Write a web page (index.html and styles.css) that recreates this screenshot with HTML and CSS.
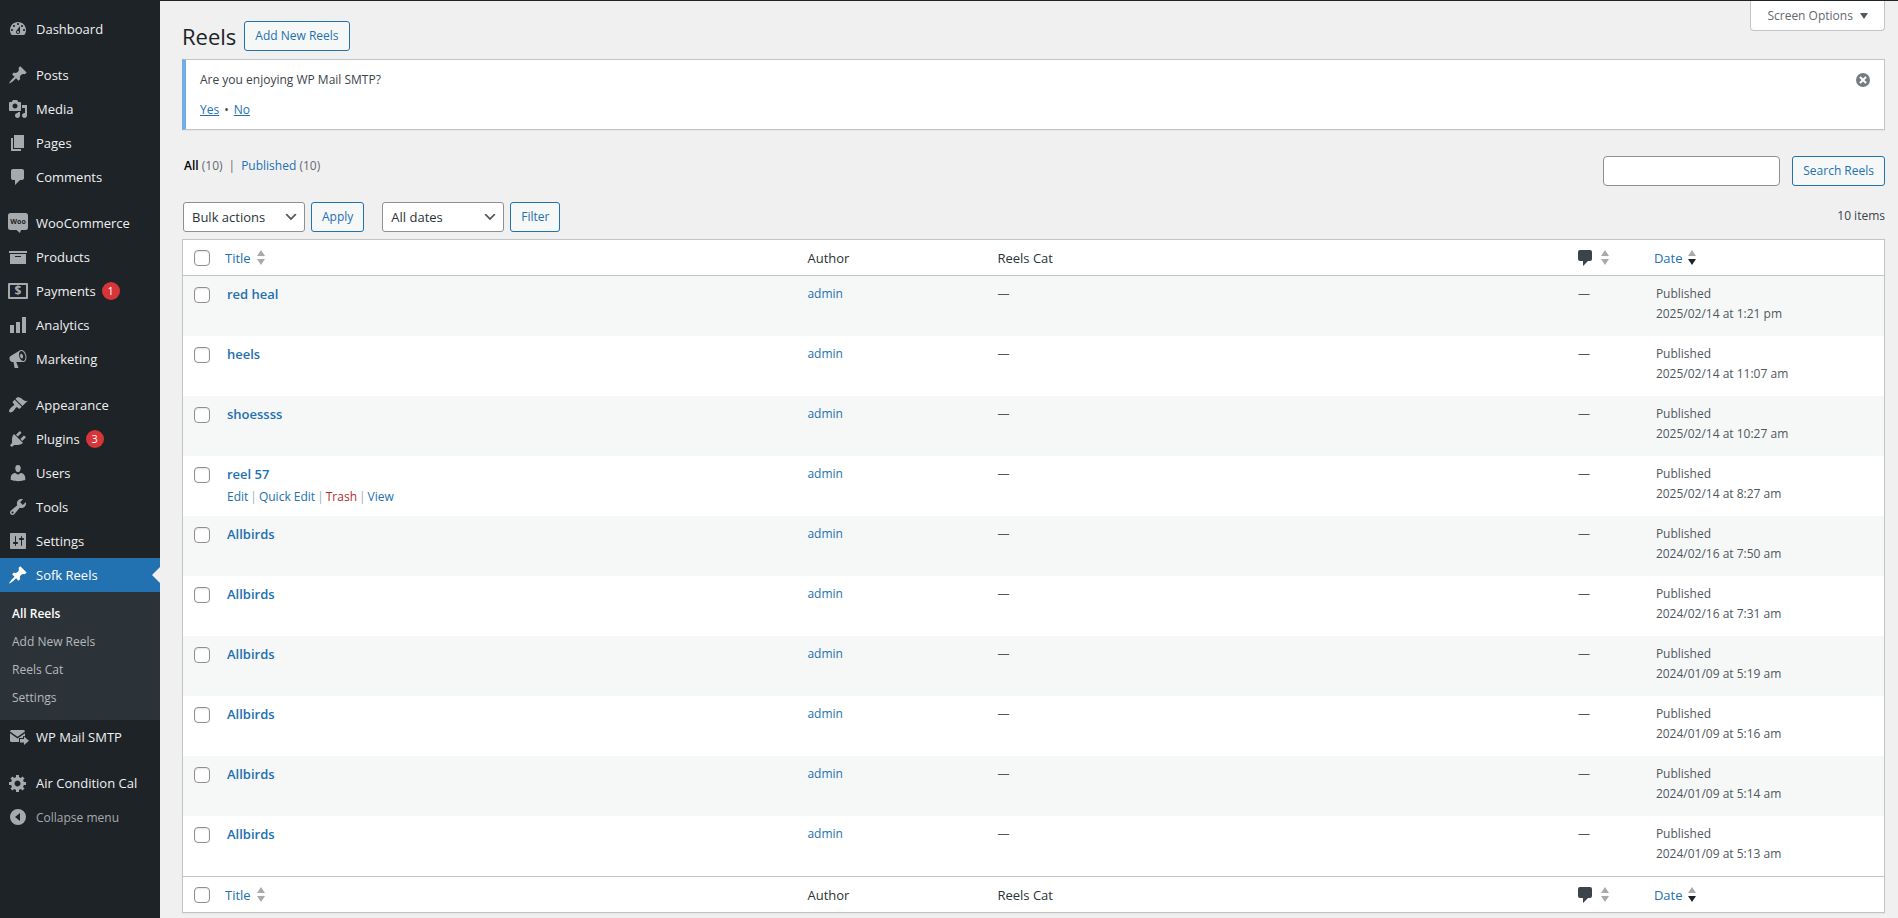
FILE: index.html
```html
<!DOCTYPE html>
<html lang="en">
<head>
  <meta charset="UTF-8">
  <title>Reels</title>
  <link rel="stylesheet" href="styles.css">
</head>
<body>
  <div class="topbar"></div>
  <div class="layout">
    <nav class="sidebar">
      <ul class="menu">
        <li><a href="#"><svg viewBox="0 0 20 20"><path d="M3.76 16h12.48c1.1-1.37 1.76-3.11 1.76-5 0-4.42-3.58-8-8-8s-8 3.58-8 8c0 1.89.66 3.63 1.76 5zM10 4c.55 0 1 .45 1 1s-.45 1-1 1-1-.45-1-1 .45-1 1-1zM6 6c.55 0 1 .45 1 1s-.45 1-1 1-1-.45-1-1 .45-1 1-1zm8 0c.55 0 1 .45 1 1s-.45 1-1 1-1-.45-1-1 .45-1 1-1zm-5.37 5.55L12 7v6c0 1.1-.9 2-2 2s-2-.9-2-2c0-.57.24-1.08.63-1.45zM4 10c.55 0 1 .45 1 1s-.45 1-1 1-1-.45-1-1 .45-1 1-1zm12 0c.55 0 1 .45 1 1s-.45 1-1 1-1-.45-1-1 .45-1 1-1zm-5 3c0-.55-.45-1-1-1s-1 .45-1 1 .45 1 1 1 1-.45 1-1z"/></svg>Dashboard</a></li>
      </ul>
      <ul class="menu">
        <li><a href="#"><svg viewBox="0 0 20 20"><path d="M10.44 3.02l1.82-1.82 6.36 6.35-1.83 1.82c-1.05-.68-2.48-.57-3.41.36l-.75.75c-.92.93-1.04 2.35-.35 3.41l-1.83 1.82-2.41-2.41-2.8 2.79c-.42.42-3.38 2.71-3.8 2.29s1.86-3.39 2.28-3.81l2.79-2.79L4.1 9.36l1.83-1.82c1.05.69 2.48.57 3.4-.36l.75-.75c.93-.92 1.05-2.35.36-3.41z"/></svg>Posts</a></li>
        <li><a href="#"><svg viewBox="0 0 20 20"><path d="M13 11V4c0-.55-.45-1-1-1h-1.67L9 1H5L3.67 3H2c-.55 0-1 .45-1 1v7c0 .55.45 1 1 1h10c.55 0 1-.45 1-1zM7 4.5c1.38 0 2.5 1.12 2.5 2.5S8.38 9.5 7 9.5 4.5 8.38 4.5 7 5.62 4.5 7 4.5zM14 6h5v10.5c0 1.38-1.12 2.5-2.5 2.5S14 17.88 14 16.5s1.12-2.5 2.5-2.5c.17 0 .34.02.5.05V9h-3V6zm-4 8.05V13h2v3.5c0 1.38-1.12 2.5-2.5 2.5S7 17.88 7 16.5 8.12 14 9.5 14c.17 0 .34.02.5.05z"/></svg>Media</a></li>
        <li><a href="#"><svg viewBox="0 0 20 20"><path d="M6 15V2h10v13H6zm-1 1h8v2H3V5h2v11z"/></svg>Pages</a></li>
        <li><a href="#"><svg viewBox="0 0 20 20"><path d="M5 2h9c1.1 0 2 .9 2 2v7c0 1.1-.9 2-2 2h-2l-5 5v-5H5c-1.1 0-2-.9-2-2V4c0-1.1.9-2 2-2z"/></svg>Comments</a></li>
      </ul>
      <ul class="menu">
        <li><a href="#"><svg viewBox="0 0 20 20"><path d="M2.5 0h15A2.5 2.5 0 0 1 20 2.500v12a2.500 2.500 0 0 1-2.500 2.500H13l-1 3-3.500-3h-6A2.500 2.500 0 0 1 0 14.500v-12A2.500 2.500 0 0 1 2.500 0z"/><text class="icon-woo" x="10" y="11">Woo</text></svg>WooCommerce</a></li>
        <li><a href="#"><svg viewBox="0 0 20 20"><path d="M19 4v2H1V4h18zM2 7h16v10H2V7zm11 3V9H7v1h6z"/></svg>Products</a></li>
        <li><a href="#"><svg viewBox="0 0 20 20"><path fill-rule="evenodd" d="M1 2h18a1 1 0 0 1 1 1v14a1 1 0 0 1-1 1H1a1 1 0 0 1-1-1V3a1 1 0 0 1 1-1zm1 2v12h16V4z"/><text class="icon-dollar" x="10" y="14">$</text></svg>Payments<span class="badge">1</span></a></li>
        <li><a href="#"><svg viewBox="0 0 20 20"><path d="M18 18V2h-4v16h4zm-6 0V7H8v11h4zm-6 0v-8H2v8h4z"/></svg>Analytics</a></li>
        <li><a href="#"><svg viewBox="0 0 20 20"><path d="M18.150 5.940c.46 1.620.38 3.220-.02 4.480-.42 1.280-1.260 2.180-2.300 2.480-.16.060-.26.060-.4.060-.06.020-.12.020-.18.020-.06.020-.14.020-.22.020h-6.800l2.220 5.500c.02.140-.06.260-.14.340-.08.100-.24.160-.34.160H6.950c-.1 0-.26-.06-.34-.16-.08-.08-.16-.2-.14-.34l-1-5.500H4.250l-.02-.02c-.5.060-1.080-.18-1.540-.62s-.88-1.080-1.060-1.880c-.24-.8-.2-1.560-.02-2.200.18-.62.580-1.080 1.060-1.300l.02-.02 9-5.400c.1-.06.180-.1.240-.16.060-.04.140-.08.240-.12.160-.08.280-.12.500-.18 1.040-.3 2.240.1 3.220.98s1.840 2.240 2.260 3.860zm-2.580 5.980h-.02c.4-.1.740-.34 1.040-.7.580-.7.860-1.760.860-3.040 0-.64-.1-1.300-.28-1.980-.34-1.360-1.020-2.500-1.780-3.240s-1.680-1.100-2.460-.88c-.82.220-1.400.960-1.700 2-.32 1.040-.28 2.360.060 3.720.38 1.360 1 2.500 1.800 3.240.78.740 1.620 1.100 2.480.88zm-2.540-7.080c.22-.04.420-.02.620.040.38.160.76.480 1.020 1s.42 1.200.42 1.780c0 .3-.04.560-.12.8-.18.480-.44.840-.86.940-.34.100-.8-.06-1.140-.4s-.64-.86-.78-1.500c-.18-.62-.12-1.240.02-1.720s.48-.84.820-.94z"/></svg>Marketing</a></li>
      </ul>
      <ul class="menu">
        <li><a href="#"><svg viewBox="0 0 20 20"><path d="M14.48 11.06L7.41 3.99l1.5-1.5c.5-.56 2.3-.47 3.51.32 1.21.8 1.43 1.28 2.91 2.1 1.18.64 2.45 1.26 4.45.85zm-.71.71L6.7 4.7 4.93 6.47c-.39.39-.39 1.02 0 1.41l1.06 1.06c.39.39.39 1.03 0 1.42-.6.6-1.43 1.11-2.21 1.69-.35.26-.7.53-1.01.84C1.43 14.23.4 16.08 1.4 17.07c.99 1 2.84-.03 4.18-1.36.31-.31.58-.66.85-1.02.57-.78 1.08-1.61 1.69-2.21.39-.39 1.02-.39 1.41 0l1.06 1.06c.39.39 1.02.39 1.41 0z"/></svg>Appearance</a></li>
        <li><a href="#"><svg viewBox="0 0 20 20"><path d="M13.11 4.36L9.87 7.6 8 5.73l3.24-3.24c.35-.34 1.05-.2 1.56.32.52.51.66 1.21.31 1.55zm-8 1.77l.91-1.12 9.01 9.01-1.19.84c-.71.71-2.63 1.16-3.82 1.16H6.14L4.9 17.26c-.59.59-1.54.59-2.12 0-.59-.58-.59-1.53 0-2.12l1.24-1.24v-3.88c0-1.13.4-3.19 1.09-3.89zm7.26 3.97l3.24-3.24c.34-.35 1.04-.21 1.55.31.52.51.66 1.21.31 1.55l-3.24 3.25z"/></svg>Plugins<span class="badge">3</span></a></li>
        <li><a href="#"><svg viewBox="0 0 20 20"><path d="M10 9.25c-2.27 0-2.73-3.44-2.73-3.44C7 4.02 7.82 2 9.97 2c2.16 0 2.98 2.02 2.71 3.81 0 0-.41 3.44-2.68 3.44zm0 2.57L12.72 10c2.39 0 4.52 2.33 4.52 4.53v2.49s-3.65 1.13-7.24 1.13c-3.65 0-7.24-1.13-7.24-1.13v-2.49c0-2.25 1.94-4.48 4.47-4.48z"/></svg>Users</a></li>
        <li><a href="#"><svg viewBox="0 0 20 20"><path d="M16.68 9.77c-1.34 1.34-3.3 1.67-4.95.99l-5.41 6.52c-.99.99-2.59.99-3.58 0s-.99-2.59 0-3.57l6.52-5.42c-.68-1.65-.35-3.61.99-4.95 1.28-1.28 3.12-1.62 4.72-1.06l-2.89 2.89 2.82 2.82 2.86-2.87c.53 1.58.18 3.39-1.08 4.65zM3.81 16.21c.4.39 1.04.39 1.43 0 .4-.4.4-1.04 0-1.43-.39-.4-1.03-.4-1.43 0-.39.39-.39 1.03 0 1.43z"/></svg>Tools</a></li>
        <li><a href="#"><svg viewBox="0 0 20 20"><path d="M18 17V3c0-.55-.45-1-1-1H3c-.55 0-1 .45-1 1v14c0 .55.45 1 1 1h14c.55 0 1-.45 1-1zM8 11h1c.55 0 1 .45 1 1s-.45 1-1 1H8v1.5c0 .28-.22.5-.5.5s-.5-.22-.5-.5V13H6c-.55 0-1-.45-1-1s.45-1 1-1h1V5.500c0-.28.22-.5.5-.5s.5.22.5.5V11zm5-2h-1c-.55 0-1-.45-1-1s.45-1 1-1h1V5.500c0-.28.22-.5.5-.5s.5.22.5.5V7h1c.55 0 1 .45 1 1s-.45 1-1 1h-1v5.500c0 .28-.22.5-.5.5s-.5-.22-.5-.5V9z"/></svg>Settings</a></li>
        <li class="current">
          <a href="#"><svg viewBox="0 0 20 20"><path d="M10.44 3.02l1.82-1.82 6.36 6.35-1.83 1.82c-1.05-.68-2.48-.57-3.41.36l-.75.75c-.92.93-1.04 2.35-.35 3.41l-1.83 1.82-2.41-2.41-2.8 2.79c-.42.42-3.38 2.71-3.8 2.29s1.86-3.39 2.28-3.81l2.79-2.79L4.1 9.36l1.83-1.82c1.05.69 2.48.57 3.4-.36l.75-.75c.93-.92 1.05-2.35.36-3.41z"/></svg>Sofk Reels</a>
          <ul class="submenu">
            <li><a href="#" class="active">All Reels</a></li>
            <li><a href="#">Add New Reels</a></li>
            <li><a href="#">Reels Cat</a></li>
            <li><a href="#">Settings</a></li>
          </ul>
        </li>
        <li><a href="#"><svg viewBox="0 0 20 20"><path d="M3.500 3h12A1.500 1.500 0 0 1 17 4.500L9.500 9.800 2 4.500A1.500 1.500 0 0 1 3.500 3zM2 6.200l7.500 5.200L17 6.200V9l-2 .2V11h-4v4H3.500A1.500 1.500 0 0 1 2 13.500zM12 12h4v-2.500l5 4.300-5 4.200v-2.500h-4z"/></svg>WP Mail SMTP</a></li>
      </ul>
      <ul class="menu">
        <li><a href="#"><svg viewBox="0 0 20 20"><path d="M18 12h-2.18c-.17.7-.44 1.35-.81 1.93l1.54 1.54-2.1 2.1-1.54-1.54c-.58.36-1.23.63-1.91.79V19H8v-2.18c-.68-.16-1.33-.43-1.91-.79l-1.54 1.54-2.12-2.12 1.54-1.54c-.36-.58-.63-1.23-.79-1.91H1V9.03h2.17c.16-.7.44-1.35.8-1.94L2.43 5.55l2.1-2.1 1.54 1.54c.58-.37 1.24-.64 1.93-.81V2h3v2.18c.68.16 1.33.43 1.91.79l1.54-1.54 2.12 2.12-1.54 1.54c.36.59.64 1.24.8 1.94H18V12zm-8.5 1.5c1.66 0 3-1.34 3-3s-1.34-3-3-3-3 1.34-3 3 1.34 3 3 3z"/></svg>Air Condition Cal</a></li>
        <li><button type="button" class="collapse"><svg viewBox="0 0 20 20"><path fill-rule="evenodd" d="M10 2a8 8 0 1 0 0 16 8 8 0 0 0 0-16zm2 4v8l-5-4z"/></svg>Collapse menu</button></li>
      </ul>
    </nav>

    <main class="content">
      <header class="page-head">
        <h1>Reels</h1>
        <a href="#" class="btn">Add New Reels</a>
        <button type="button" class="screen-options">Screen Options <svg viewBox="0 0 8 6"><path d="M0 0h8L4 6z"/></svg></button>
      </header>

      <div class="notice">
        <div>
          <p>Are you enjoying WP Mail SMTP?</p>
          <p class="answers"><a href="#">Yes</a><span>•</span><a href="#">No</a></p>
        </div>
        <button type="button" class="dismiss" aria-label="Dismiss this notice"><svg viewBox="0 0 14 14"><circle cx="7" cy="7" r="7"/><path d="M4 4l6 6M10 4l-6 6"/></svg></button>
      </div>

      <div class="views">
        <ul>
          <li><a href="#" class="all">All</a> (10)</li>
          <li>|</li>
          <li><a href="#">Published</a> (10)</li>
        </ul>
        <form class="search">
          <input type="search" aria-label="Search Reels">
          <button type="button" class="btn">Search Reels</button>
        </form>
      </div>

      <div class="tablenav">
        <select aria-label="Select bulk action"><option>Bulk actions</option></select>
        <button type="button" class="btn">Apply</button>
        <select class="dates" aria-label="Filter by date"><option>All dates</option></select>
        <button type="button" class="btn">Filter</button>
        <span class="count">10 items</span>
      </div>

      <table class="list">
        <thead>
          <tr>
            <th class="check"><input type="checkbox" aria-label="Select all"></th>
            <th><a href="#">Title<svg class="sort" viewBox="0 0 8 15"><path d="M4 0l4 6H0zM0 9h8l-4 6z"/></svg></a></th>
            <th class="author">Author</th>
            <th>Reels Cat</th>
            <th class="comments"><a href="#" aria-label="Comments"><svg class="bubble" viewBox="0 0 14 16"><path d="M2 0h10a2 2 0 0 1 2 2v7a2 2 0 0 1-2 2h-2l-5 5v-5H2a2 2 0 0 1-2-2V2a2 2 0 0 1 2-2z"/></svg><svg class="sort" viewBox="0 0 8 15"><path d="M4 0l4 6H0zM0 9h8l-4 6z"/></svg></a></th>
            <th class="date"><a href="#">Date<svg class="sort" viewBox="0 0 8 15"><path d="M4 0l4 6H0z"/><path class="on" d="M0 9h8l-4 6z"/></svg></a></th>
          </tr>
        </thead>
        <tbody id="rows"></tbody>
        <tfoot>
          <tr>
            <th class="check"><input type="checkbox" aria-label="Select all"></th>
            <th><a href="#">Title<svg class="sort" viewBox="0 0 8 15"><path d="M4 0l4 6H0zM0 9h8l-4 6z"/></svg></a></th>
            <th>Author</th>
            <th>Reels Cat</th>
            <th><a href="#" aria-label="Comments"><svg class="bubble" viewBox="0 0 14 16"><path d="M2 0h10a2 2 0 0 1 2 2v7a2 2 0 0 1-2 2h-2l-5 5v-5H2a2 2 0 0 1-2-2V2a2 2 0 0 1 2-2z"/></svg><svg class="sort" viewBox="0 0 8 15"><path d="M4 0l4 6H0zM0 9h8l-4 6z"/></svg></a></th>
            <th><a href="#">Date<svg class="sort" viewBox="0 0 8 15"><path d="M4 0l4 6H0z"/><path class="on" d="M0 9h8l-4 6z"/></svg></a></th>
          </tr>
        </tfoot>
      </table>
    </main>
  </div>

  <script>
    const reels = [
      ['red heal', '2025/02/14 at 1:21 pm'],
      ['heels', '2025/02/14 at 11:07 am'],
      ['shoessss', '2025/02/14 at 10:27 am'],
      ['reel 57', '2025/02/14 at 8:27 am', true],
      ['Allbirds', '2024/02/16 at 7:50 am'],
      ['Allbirds', '2024/02/16 at 7:31 am'],
      ['Allbirds', '2024/01/09 at 5:19 am'],
      ['Allbirds', '2024/01/09 at 5:16 am'],
      ['Allbirds', '2024/01/09 at 5:14 am'],
      ['Allbirds', '2024/01/09 at 5:13 am']
    ];

    const actions = `<div class="row-actions"><a href="#">Edit</a> | <a href="#">Quick Edit</a> | <a href="#" class="trash">Trash</a> | <a href="#">View</a></div>`;

    document.getElementById('rows').innerHTML = reels.map(([title, date, open]) => `
      <tr>
        <td class="check"><input type="checkbox" aria-label="Select ${title}"></td>
        <td><a href="#" class="row-title">${title}</a>${open ? actions : ''}</td>
        <td><a href="#">admin</a></td>
        <td>—</td>
        <td>—</td>
        <td>Published<br>${date}</td>
      </tr>`).join('');
  </script>
</body>
</html>
```
FILE: styles.css
```css
* {
  box-sizing: border-box;
}

body {
  margin: 0;
  min-height: 100vh;
  display: flex;
  flex-direction: column;
  background: #f0f0f1;
  color: #3c434a;
  font-family: "Open Sans", "Noto Sans", sans-serif;
  font-size: 12px;
  line-height: 20px;
}

a {
  color: #2271b1;
  text-decoration: none;
}

ul, p, h1 {
  margin: 0;
  padding: 0;
}

ul {
  list-style: none;
}

button, input, select {
  font-family: inherit;
  font-size: inherit;
  margin: 0;
}

.topbar {
  height: 1px;
  background: #1d2327;
}

.layout {
  display: flex;
  flex: 1;
}

/* Sidebar */
.sidebar {
  width: 160px;
  flex-shrink: 0;
  padding-top: 11px;
  background: #1d2327;
}

.menu {
  margin-bottom: 12px;
}

.menu > li > a,
.collapse {
  display: flex;
  align-items: center;
  width: 100%;
  height: 34px;
  padding: 0 0 0 8px;
  color: #f0f0f1;
  font-size: 13px;
  white-space: nowrap;
}

.menu svg {
  width: 20px;
  height: 20px;
  margin-right: 8px;
  fill: #a7aaad;
  overflow: visible;
}

.menu .icon-woo {
  fill: #1d2327;
  font-size: 7px;
  font-weight: bold;
  text-anchor: middle;
}

.icon-dollar {
  font-size: 12px;
  font-weight: bold;
  text-anchor: middle;
}

.badge {
  width: 18px;
  height: 18px;
  margin-left: 6px;
  border-radius: 9px;
  background: #d63638;
  color: #fff;
  font-size: 11px;
  line-height: 18px;
  text-align: center;
}

.menu > .current > a {
  position: relative;
  background: #2271b1;
  color: #fff;
}

.menu .current > a svg {
  fill: #fff;
}

.current > a::after {
  content: "";
  position: absolute;
  right: 0;
  border: 8px solid transparent;
  border-right-color: #f0f0f1;
  border-left: 0;
}

.submenu {
  padding: 8px 0;
  background: #2c3338;
}

.submenu a {
  display: block;
  padding: 4px 12px;
  color: #b5b8bb;
}

.submenu .active {
  color: #fff;
  font-weight: 600;
}

.menu .collapse {
  border: 0;
  background: none;
  color: #a7aaad;
  font-size: 12px;
}

/* Content */
.content {
  flex: 1;
  padding: 0 13px 0 22px;
}

.page-head {
  display: flex;
  align-items: flex-end;
  height: 50px;
}

h1 {
  color: #1d2327;
  font-size: 22px;
  font-weight: 400;
  line-height: 30px;
}

.btn {
  height: 30px;
  padding: 0 10px;
  border: 1px solid #2271b1;
  border-radius: 3px;
  background: #f6f7f7;
  color: #2271b1;
  line-height: 28px;
  white-space: nowrap;
}

.page-head .btn {
  margin-left: 8px;
}

.screen-options {
  align-self: flex-start;
  height: 30px;
  margin-left: auto;
  padding: 0 16px;
  border: 1px solid #c3c4c7;
  border-top: 0;
  border-radius: 0 0 4px 4px;
  background: #fff;
  color: #646970;
}

.screen-options svg {
  width: 8px;
  height: 6px;
  margin-left: 4px;
  fill: #50575e;
  vertical-align: 1px;
}

.notice {
  display: flex;
  justify-content: space-between;
  align-items: flex-start;
  margin-top: 8px;
  padding: 10px 14px 9px;
  border: 1px solid #c3c4c7;
  border-left: 4px solid #72aee6;
  background: #fff;
  box-shadow: 0 1px 1px rgba(0, 0, 0, .04);
}

.answers {
  display: flex;
  gap: 5px;
  margin-top: 10px;
}

.answers a {
  text-decoration: underline;
}

.dismiss {
  height: 20px;
  padding: 0;
  border: 0;
  background: none;
}

.dismiss svg {
  display: block;
  width: 14px;
  height: 14px;
  fill: #787c82;
  stroke: #fff;
}

.dismiss circle {
  stroke: none;
}

.dismiss path {
  stroke-width: 2;
}

.views {
  display: flex;
  justify-content: space-between;
  align-items: flex-start;
  margin-top: 26px;
}

.views ul {
  display: flex;
  gap: 6px;
  padding-left: 2px;
  color: #646970;
}

.views .all {
  color: #000;
  font-weight: 600;
}

.search {
  display: flex;
  gap: 12px;
}

.search input {
  width: 177px;
  height: 30px;
  padding: 0 8px;
  border: 1px solid #8c8f94;
  border-radius: 4px;
  background: #fff;
}

.tablenav {
  display: flex;
  gap: 6px;
  margin: 16px 0 7px 1px;
}

.tablenav select {
  appearance: none;
  width: 122px;
  height: 30px;
  padding: 0 24px 0 8px;
  border: 1px solid #8c8f94;
  border-radius: 3px;
  background: #fff url("data:image/svg+xml,%3Csvg xmlns='http://www.w3.org/2000/svg' viewBox='0 0 20 20'%3E%3Cpath d='M5 6l5 5 5-5 2 1-7 7-7-7 2-1z' fill='%23555'/%3E%3C/svg%3E") no-repeat right 5px center / 16px 16px;
  color: #2c3338;
  font-size: 13px;
}

.tablenav .dates {
  margin-left: 12px;
}

.count {
  margin-left: auto;
  line-height: 28px;
}

/* Table */
.list {
  width: 100%;
  table-layout: fixed;
  border: 1px solid #c3c4c7;
  border-spacing: 0;
  background: #fff;
  box-shadow: 0 1px 1px rgba(0, 0, 0, .04);
}

.list th {
  height: 36px;
  padding: 0 10px;
  color: #2c3338;
  font-size: 13px;
  font-weight: 400;
  text-align: left;
}

.list thead th {
  border-bottom: 1px solid #c3c4c7;
}

.list tfoot th {
  border-top: 1px solid #c3c4c7;
}

.list th a {
  display: flex;
  align-items: center;
  margin-left: -2px;
}

.list td {
  height: 60px;
  padding: 8px 10px;
  color: #50575e;
  vertical-align: top;
}

.list tbody tr:nth-child(odd) {
  background: #f6f7f7;
}

.list .check {
  width: 34px;
  padding-left: 11px;
  padding-right: 0;
}

.list td.check {
  padding-top: 11px;
}

.author {
  width: 190px;
}

.comments {
  width: 78px;
}

.date {
  width: 14%;
}

.check input {
  display: block;
  appearance: none;
  width: 16px;
  height: 16px;
  border: 1px solid #8c8f94;
  border-radius: 4px;
  background: #fff;
  box-shadow: inset 0 1px 2px rgba(0, 0, 0, .1);
}

.sort {
  width: 8px;
  height: 15px;
  margin-left: 6px;
  fill: #a7aaad;
}

.sort .on {
  fill: #1d2327;
}

.bubble {
  width: 14px;
  height: 16px;
  margin: 0 3px 0 2px;
  fill: #3c434a;
}

.row-title {
  display: block;
  font-size: 13px;
  font-weight: 600;
}

.row-actions {
  display: flex;
  gap: 2px;
  padding-top: 3px;
  color: #a7aaad;
}

.row-actions .trash {
  color: #b32d2e;
}
```
